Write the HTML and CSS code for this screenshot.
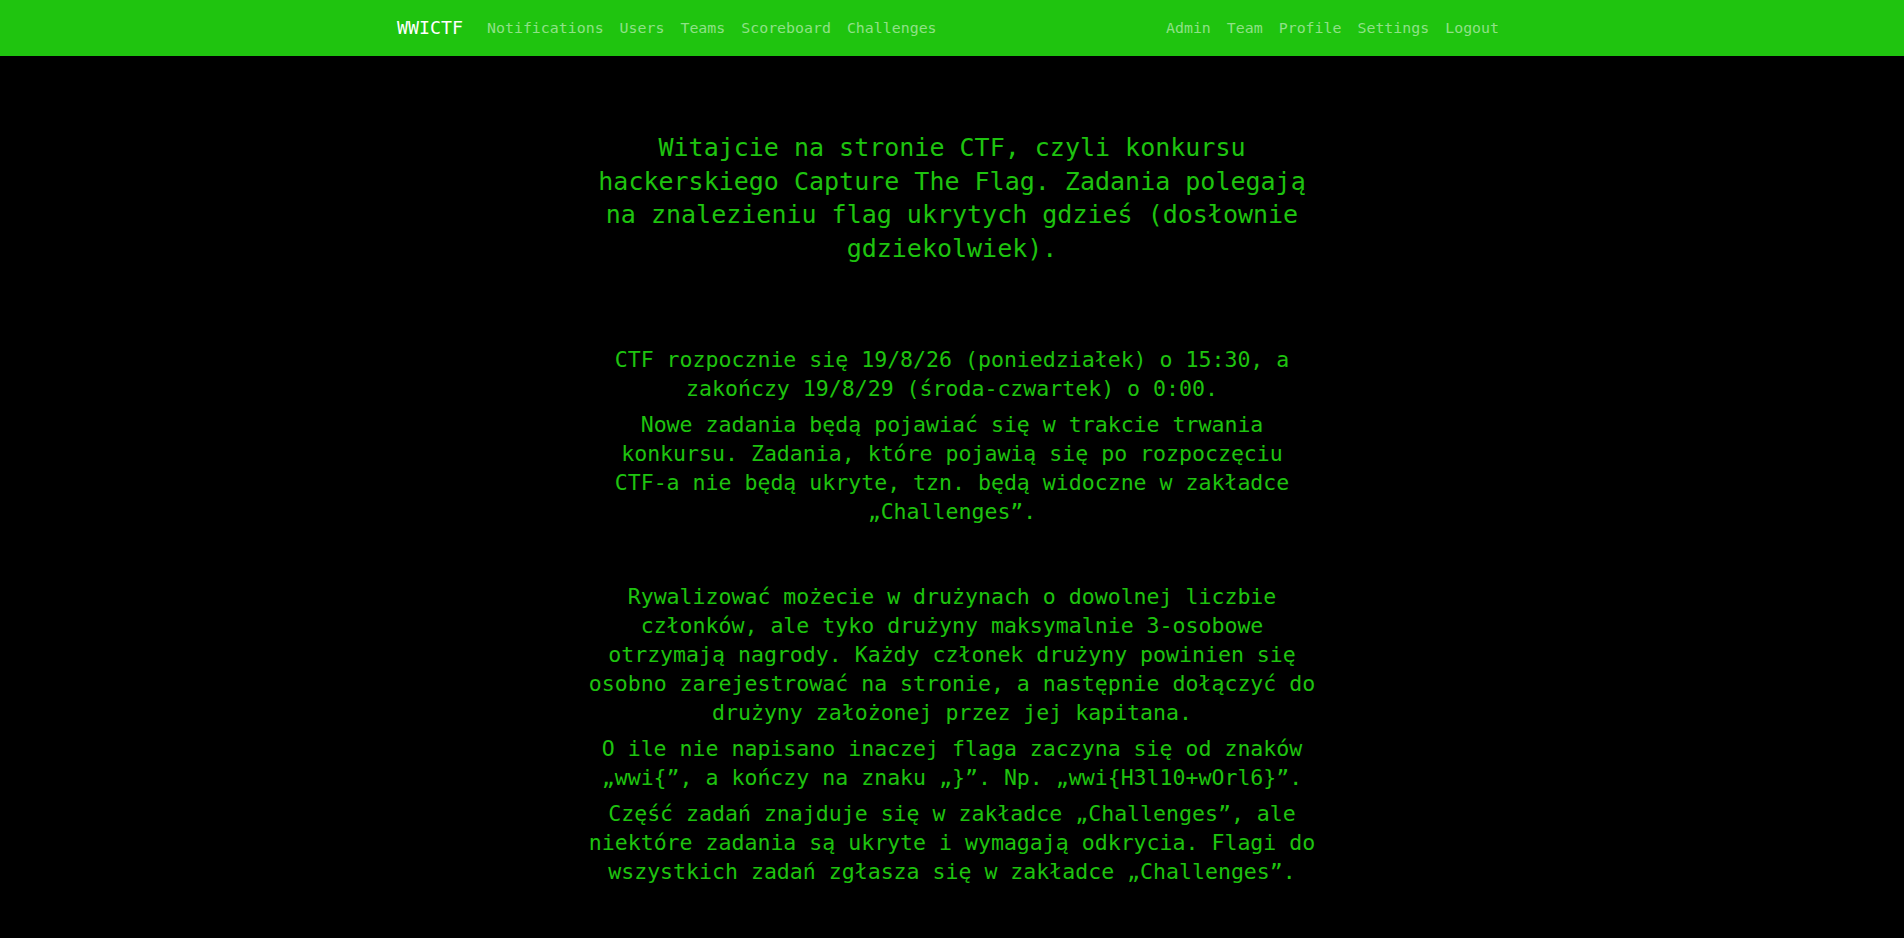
FILE: index.html
```html
<!DOCTYPE html>
<html lang="pl">
<head>
<meta charset="utf-8">
<title>WWICTF</title>
<link rel="stylesheet" href="styles.css">
</head>
<body>
<nav class="navbar">
  <div class="container nav-inner">
    <a class="brand" href="#">WWICTF</a>
    <ul class="nav-links">
      <li><a href="#">Notifications</a></li>
      <li><a href="#">Users</a></li>
      <li><a href="#">Teams</a></li>
      <li><a href="#">Scoreboard</a></li>
      <li><a href="#">Challenges</a></li>
    </ul>
    <ul class="nav-links nav-right">
      <li><a href="#">Admin</a></li>
      <li><a href="#">Team</a></li>
      <li><a href="#">Profile</a></li>
      <li><a href="#">Settings</a></li>
      <li><a href="#">Logout</a></li>
    </ul>
  </div>
</nav>
<main class="content">
  <h3 class="intro">Witajcie na stronie CTF, czyli konkursu hackerskiego Capture The Flag. Zadania polegają na znalezieniu flag ukrytych gdzieś (dosłownie gdziekolwiek).</h3>
  <section class="group group-first">
    <h4>CTF rozpocznie się 19/8/26 (poniedziałek) o 15:30, a zakończy 19/8/29 (środa-czwartek) o 0:00.</h4>
    <h4>Nowe zadania będą pojawiać się w trakcie trwania konkursu. Zadania, które pojawią się po rozpoczęciu CTF&#8209;a nie będą ukryte, tzn. będą widoczne w zakładce „Challenges”.</h4>
  </section>
  <section class="group group-second">
    <h4>Rywalizować możecie w drużynach o dowolnej liczbie członków, ale tyko drużyny maksymalnie 3-osobowe otrzymają nagrody. Każdy członek drużyny powinien się osobno zarejestrować na stronie, a następnie dołączyć do drużyny założonej przez jej kapitana.</h4>
    <h4>O ile nie napisano inaczej flaga zaczyna się od znaków „wwi{”, a kończy na znaku „}”. Np. „wwi{H3l10+wOrl6}”.</h4>
    <h4>Część zadań znajduje się w zakładce „Challenges”, ale niektóre zadania są ukryte i wymagają odkrycia. Flagi do wszystkich zadań zgłasza się w zakładce „Challenges”.</h4>
  </section>
</main>
</body>
</html>
```

FILE: styles.css
```css
html, body {
  margin: 0;
  padding: 0;
}
body {
  background: #000;
  font-family: "DejaVu Sans Mono", "Liberation Mono", monospace;
  color: #1ec30f;
}
.navbar {
  background: #1fc40f;
  height: 56px;
  box-sizing: border-box;
  padding: 8px 0;
}
.container {
  width: 1110px;
  margin: 0 auto;
}
.nav-inner {
  display: flex;
  align-items: center;
  height: 40px;
}
.brand {
  color: #fff;
  text-decoration: none;
  font-size: 18.3px;
  line-height: 30px;
  margin-right: 16px;
}
.nav-links {
  display: flex;
  list-style: none;
  margin: 0;
  padding: 0;
}
.nav-right {
  margin-left: auto;
}
.nav-links a {
  display: block;
  padding: 8px;
  color: #8fe187;
  text-decoration: none;
  font-size: 14.9px;
  line-height: 24px;
}
.content {
  width: 732px;
  margin: 0 auto;
  text-align: center;
  padding-top: 75px;
}
.intro {
  font-size: 25px;
  line-height: 33.5px;
  font-weight: normal;
  margin: 0;
}
.group h4 {
  font-size: 21.56px;
  line-height: 29px;
  font-weight: normal;
  margin: 0 0 7px;
}
.group-first {
  margin-top: 80px;
}
.group-second {
  margin-top: 56px;
}
```
